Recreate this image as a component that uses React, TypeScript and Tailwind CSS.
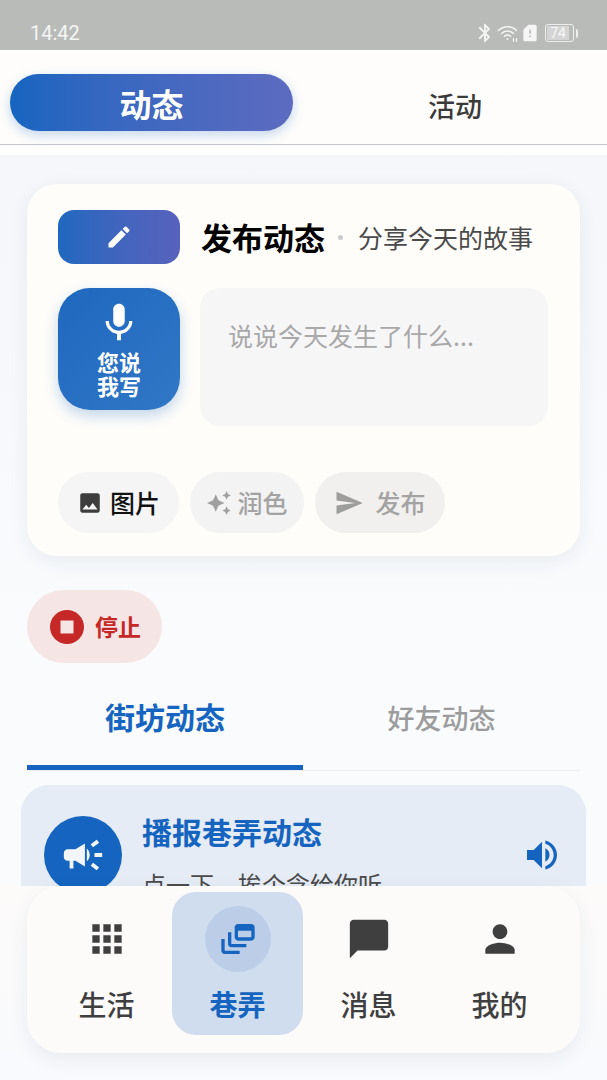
import React from "react";
import {
  MdApps,
  MdAutoAwesome,
  MdBluetooth,
  MdCampaign,
  MdChatBubble,
  MdEdit,
  MdImage,
  MdMic,
  MdOutlineDynamicFeed,
  MdPerson,
  MdSend,
  MdSimCardAlert,
  MdStop,
  MdVolumeUp,
} from "react-icons/md";

const font = "font-['Noto_Sans_CJK_SC','Noto_Sans',sans-serif]";

const StatusBar = () => (
  <div className="h-[50px] bg-[#b9bbb9] flex items-end justify-between pl-[30px] pr-[29px] pb-[5px] text-[#f4f5f4]">
    <span className="text-[20px] leading-[24px] font-['Roboto',sans-serif]">14:42</span>
    <div className="flex items-center h-[24px]">
      <MdBluetooth className="w-[22px] h-[22px]" />
      <svg viewBox="0 0 22 20" className="w-[22px] h-[20px] ml-[1px]" fill="none" stroke="currentColor" strokeWidth="1.5" strokeLinecap="round">
        <path d="M1.5 7.5C6.5 2.5 14.5 2.5 19.5 7.5" />
        <path d="M4.5 10.5C8 7.3 13 7.3 16.5 10.5" />
        <path d="M7.5 13.2C9.3 11.8 11.7 11.8 13.5 13.2" />
        <circle cx="10.5" cy="16" r="1" fill="currentColor" stroke="none" />
        <path d="M16.5 15.5v3M19.5 15.5v3" strokeWidth="1.2" />
      </svg>
      <MdSimCardAlert className="w-[20px] h-[20px] ml-[1px]" />
      <div className="ml-[5px] w-[29px] h-[18px] border border-[#eceeec] rounded-[3px] p-[1px]">
        <div className="w-[22px] h-full bg-[#d3d4d3] text-[14px] leading-[14px] text-center text-[#f6f6f6] font-['Roboto',sans-serif]">74</div>
      </div>
      <div className="ml-[2px] w-[2px] h-[9px] bg-[#eceeec] rounded-r-sm" />
    </div>
  </div>
);

const TopTabs = () => (
  <div className="h-[95px] bg-[#fefdfb] border-b border-[#c4c6cb] flex items-start pl-[10px]">
    <div className="mt-[24px] w-[283px] h-[57px] rounded-full bg-gradient-to-r from-[#1565c0] to-[#5c6bc0] shadow-[0_4px_12px_rgba(21,101,192,0.25)] flex items-center justify-center text-white text-[32px] font-bold">
      动态
    </div>
    <div className="mt-[35px] flex-1 text-center pl-[10px] text-[#3a3a3a] text-[27px] leading-[42px] font-medium">活动</div>
  </div>
);

const ActionChip = ({ icon, label, className }: { icon: React.ReactNode; label: string; className: string }) => (
  <div className={`h-[61px] rounded-full flex items-center justify-center font-medium ${className}`}>
    {icon}
    <span>{label}</span>
  </div>
);

const ComposeCard = () => (
  <div className="mx-[27px] mt-[29px] h-[372px] rounded-[30px] bg-[#fefdfa] shadow-[0_6px_20px_rgba(40,60,90,0.07)] px-[31px] pt-[26px]">
    <div className="flex items-center h-[54px]">
      <div className="w-[122px] h-[54px] rounded-[16px] bg-gradient-to-r from-[#1e68bf] to-[#5762bd] flex items-center justify-center">
        <MdEdit className="w-[28px] h-[28px] text-white" />
      </div>
      <span className="ml-[21px] text-[31px] font-bold text-black leading-[54px]">发布动态</span>
      <span className="ml-[13px] w-[5px] h-[5px] rounded-full bg-[#c9cbce]" />
      <span className="ml-[15px] text-[25px] text-[#4a4a4a] leading-[54px]">分享今天的故事</span>
    </div>
    <div className="flex mt-[24px]">
      <div className="w-[122px] h-[122px] rounded-[32px] bg-gradient-to-br from-[#1e68bf] to-[#3177c6] shadow-[0_6px_14px_rgba(21,101,192,0.25)] flex flex-col items-center text-white pt-[12px]">
        <MdMic className="w-[46px] h-[46px]" />
        <div className="text-[22px] leading-[24px] font-bold text-center mt-[3px]">
          您说
          <br />
          我写
        </div>
      </div>
      <div className="ml-[20px] w-[348px] h-[138px] rounded-[20px] bg-[#f6f6f7] px-[28px] py-[29px] text-[25px] leading-[36px] text-[#a8a8a9]">
        说说今天发生了什么...
      </div>
    </div>
    <div className="flex mt-[46px] gap-[11px]">
      <ActionChip
        className="w-[121px] bg-[#f5f5f6] text-[25px] text-[#111]"
        icon={<MdImage className="w-[26px] h-[26px] text-[#3d3d3d] mr-[7px]" />}
        label="图片"
      />
      <ActionChip
        className="w-[114px] bg-[#f3f3f3] text-[25px] text-[#a3a3a3]"
        icon={<MdAutoAwesome className="w-[26px] h-[26px] text-[#a0a0a0] mr-[5px]" />}
        label="润色"
      />
      <ActionChip
        className="w-[130px] bg-[#f1f0ee] text-[25px] text-[#a3a3a3]"
        icon={<MdSend className="w-[30px] h-[30px] text-[#9d9d9b] mr-[11px]" />}
        label="发布"
      />
    </div>
  </div>
);

const FeedTabs = () => (
  <div className="mx-[27px] flex border-b border-[#eceef2] h-[108px]">
    <div className="w-[276px] h-[107px] border-b-[5px] border-[#1565c0] text-center text-[#1565c0] text-[30px] font-bold pt-[25px] leading-[56px]">
      街坊动态
    </div>
    <div className="flex-1 text-center text-[#9c9c9c] text-[27px] font-medium pt-[26px] leading-[58px]">好友动态</div>
  </div>
);

const BroadcastCard = () => (
  <div className="mx-[21px] mt-[14px] h-[180px] rounded-[28px] bg-[#e6ecf5] flex pl-[23px] pr-[24px] pt-[31px]">
    <div className="w-[78px] h-[78px] rounded-full bg-[#1565c0] flex items-center justify-center shrink-0">
      <MdCampaign className="w-[46px] h-[46px] text-[#f2f5fa]" />
    </div>
    <div className="ml-[20px] flex-1 mt-[-7px]">
      <div className="text-[30px] leading-[44px] font-bold text-[#1565c0]">播报巷弄动态</div>
      <div className="mt-[14px] text-[24px] leading-[34px] text-[#4a4a4a]">点一下，挨个念给你听</div>
    </div>
    <MdVolumeUp className="w-[40px] h-[40px] text-[#1565c0] mt-[19px]" />
  </div>
);

const navItems = [
  { label: "生活", icon: <MdApps className="w-[44px] h-[44px]" /> },
  { label: "巷弄", icon: <MdOutlineDynamicFeed className="w-[40px] h-[40px]" />, active: true },
  { label: "消息", icon: <MdChatBubble className="w-[46px] h-[46px]" /> },
  { label: "我的", icon: <MdPerson className="w-[44px] h-[44px]" /> },
];

const BottomNav = () => (
  <div className="absolute left-0 right-0 top-[886px] bottom-0 bg-gradient-to-b from-[#fdfbfa] to-[#f8fafd]">
    <div className="mx-[27px] h-[167px] rounded-[34px] bg-[#fdfafa] shadow-[0_6px_20px_rgba(40,60,90,0.08)] flex pl-[14px] pr-[14px] pt-[6px]">
      {navItems.map((item) => (
        <div
          key={item.label}
          className={`w-[131px] h-[143px] rounded-[24px] flex flex-col items-center pt-[14px] ${
            item.active ? "bg-[#d0ddef] text-[#1565c0]" : "text-[#3f3f3f]"
          }`}
        >
          <div className={`w-[66px] h-[66px] rounded-full flex items-center justify-center ${item.active ? "bg-[#bccde8]" : ""}`}>
            {item.icon}
          </div>
          <span className={`mt-[11px] text-[28px] leading-[42px] ${item.active ? "font-bold" : "font-medium"}`}>{item.label}</span>
        </div>
      ))}
    </div>
  </div>
);

export default function App() {
  return (
    <div className={`relative w-[607px] h-[1080px] overflow-hidden bg-gradient-to-b from-[#f3f5f9] via-[#f9fbfd] via-60% to-[#f9fbfd] ${font}`}>
      <StatusBar />
      <TopTabs />
      <div className="h-[10px] bg-[#fefefd]" />
      <ComposeCard />
      <div className="ml-[27px] mt-[34px] w-[135px] h-[73px] rounded-full bg-[#f6e5e5] flex items-center pl-[23px]">
        <div className="w-[34px] h-[34px] rounded-full bg-[#c62828] flex items-center justify-center">
          <MdStop className="w-[26px] h-[26px] text-[#f6e5e5]" />
        </div>
        <span className="ml-[11px] text-[23px] font-bold text-[#c62828]">停止</span>
      </div>
      <FeedTabs />
      <BroadcastCard />
      <BottomNav />
    </div>
  );
}
